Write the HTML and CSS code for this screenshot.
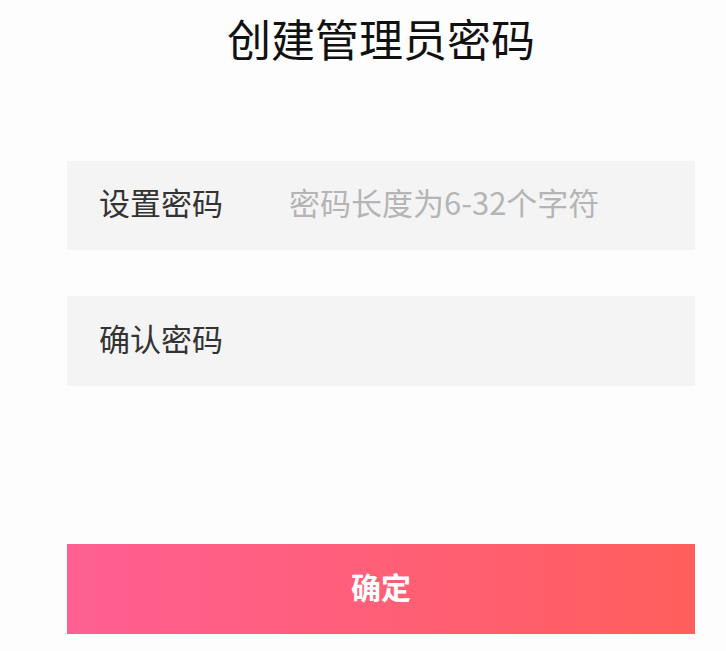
FILE: index.html
```html
<!DOCTYPE html>
<html lang="zh-CN">
<head>
    <meta charset="UTF-8">
    <meta name="viewport" content="width=device-width, initial-scale=1.0">
    <title>创建管理员密码</title>
    <link rel="stylesheet" href="styles.css">
</head>
<body>
    <div class="page">
        <h1 class="title">创建管理员密码</h1>
        <form class="pwd-form">
            <label class="field">
                <span class="field-label">设置密码</span>
                <input class="field-input" type="password" placeholder="密码长度为6-32个字符">
            </label>
            <label class="field">
                <span class="field-label">确认密码</span>
                <input class="field-input" type="password">
            </label>
            <button class="submit" type="button">确定</button>
        </form>
    </div>
</body>
</html>
```

FILE: styles.css
```css
body {
    margin: 0;
    background-color: #fdfdfd;
    font-family: "Noto Sans CJK SC", "Noto Sans", sans-serif;
}

.page {
    padding: 16px 31px 0 67px;
}

.title {
    margin: 0;
    padding-bottom: 2px;
    font-size: 44px;
    font-weight: normal;
    line-height: 44px;
    text-align: center;
    color: #111111;
}

.pwd-form {
    display: flex;
    flex-direction: column;
    margin-top: 99px;
}

.field {
    display: grid;
    grid-template-columns: 190px 1fr;
    align-items: center;
    height: 89px;
    padding-left: 32px;
    box-sizing: border-box;
    background-color: #f4f4f4;
    margin-bottom: 46px;
}

.field:nth-child(2) {
    height: 90px;
}

.field-label,
.field-input {
    font-size: 31px;
    line-height: 1;
    margin-top: -8px;
}

.field-label {
    color: #333333;
}

.field-input {
    border: none;
    outline: none;
    background: transparent;
    font-family: inherit;
    color: #333333;
    padding: 0;
    min-width: 0;
}

.field-input::placeholder {
    color: #b5b5b5;
}

.submit {
    margin-top: 112px;
    height: 90px;
    padding: 0 0 6px;
    border: none;
    background: linear-gradient(to right, #ff6093, #ff5e5c);
    color: #ffffff;
    font-family: inherit;
    font-size: 30px;
    font-weight: bold;
    cursor: pointer;
}
```
